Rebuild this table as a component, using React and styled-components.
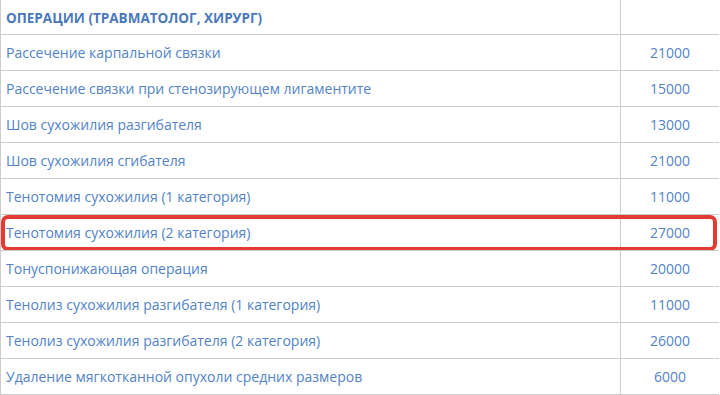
import React from "react";
import styled, { createGlobalStyle } from "styled-components";

const Global = createGlobalStyle`
  html, body { margin: 0; padding: 0; background: #fff; }
  body { font-family: "Open Sans", "Liberation Sans", sans-serif; }
`;

const Table = styled.div`
  width: 719px;
  border-left: 1px solid #cccccc;
  border-bottom: 1px solid #cccccc;
  box-sizing: border-box;
`;

const Row = styled.div`
  position: relative;
  display: grid;
  grid-template-columns: 620px 1fr;
  height: ${(p) => (p.$header ? 34 : 36)}px;
  box-sizing: border-box;
  border-top: ${(p) => (p.$header ? "none" : "1px solid #cccccc")};
`;

const NameCell = styled.div`
  display: flex;
  align-items: center;
  padding: 0 0 0 5px;
  box-sizing: border-box;
  border-right: 1px solid #cccccc;
  font-size: ${(p) => (p.$header ? "13.5px" : "14px")};
  font-weight: ${(p) => (p.$header ? 700 : 400)};
  color: ${(p) => (p.$header ? "#4a78bd" : "#5283c8")};
  text-transform: ${(p) => (p.$header ? "uppercase" : "none")};
  white-space: nowrap;
  padding-top: ${(p) => (p.$header ? "2px" : "0")};
`;

const PriceCell = styled.div`
  display: flex;
  align-items: center;
  justify-content: center;
  font-size: 14px;
  color: #5283c8;
`;

const Highlight = styled.div`
  position: absolute;
  left: 0;
  top: 0;
  width: 716px;
  height: 36px;
  box-sizing: border-box;
  border: 4px solid #e23c32;
  border-radius: 7px;
  pointer-events: none;
`;

const rows = [
  ["Рассечение карпальной связки", "21000"],
  ["Рассечение связки при стенозирующем лигаментите", "15000"],
  ["Шов сухожилия разгибателя", "13000"],
  ["Шов сухожилия сгибателя", "21000"],
  ["Тенотомия сухожилия (1 категория)", "11000"],
  ["Тенотомия сухожилия (2 категория)", "27000", true],
  ["Тонуспонижающая операция", "20000"],
  ["Тенолиз сухожилия разгибателя (1 категория)", "11000"],
  ["Тенолиз сухожилия разгибателя (2 категория)", "26000"],
  ["Удаление мягкотканной опухоли средних размеров", "6000"],
];

export default function App() {
  return (
    <>
      <Global />
      <Table>
        <Row $header>
          <NameCell $header>Операции (травматолог, хирург)</NameCell>
          <PriceCell />
        </Row>
        {rows.map(([name, price, hl]) => (
          <Row key={name}>
            <NameCell>{name}</NameCell>
            <PriceCell>{price}</PriceCell>
            {hl && <Highlight />}
          </Row>
        ))}
      </Table>
    </>
  );
}
